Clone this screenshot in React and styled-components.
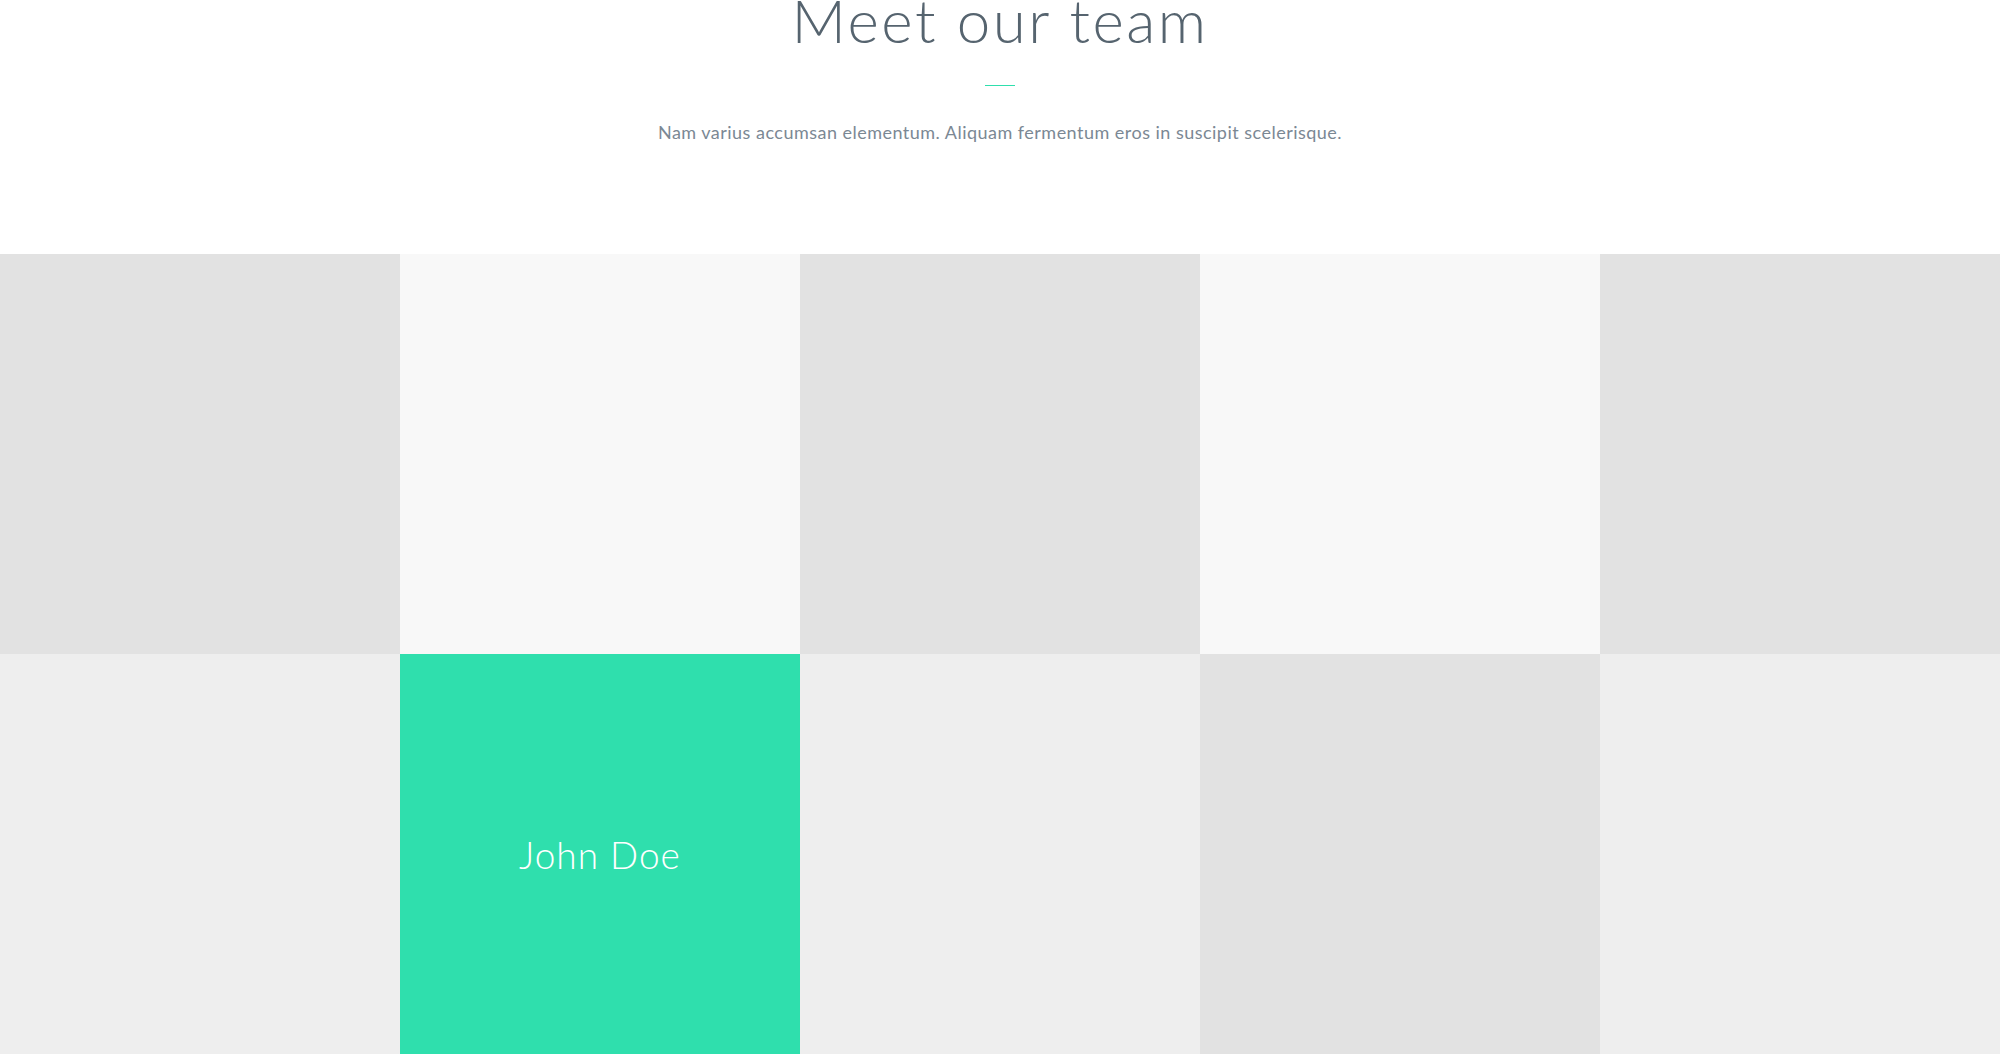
import React from "react";
import styled, { createGlobalStyle } from "styled-components";

const GlobalStyle = createGlobalStyle`
  html, body {
    margin: 0;
    padding: 0;
    background: #ffffff;
    overflow: hidden;
  }
`;

const Page = styled.div`
  width: 2000px;
  height: 1054px;
  overflow: hidden;
  font-family: Lato, "Liberation Sans", sans-serif;
`;

const Header = styled.header`
  display: flex;
  flex-direction: column;
  align-items: center;
  height: 254px;
`;

const Title = styled.h2`
  margin: -16px 0 0;
  font-size: 60px;
  font-weight: 300;
  line-height: 72px;
  letter-spacing: 2.5px;
  color: #56646f;
`;

const Divider = styled.div`
  width: 30px;
  height: 1px;
  margin-top: 29px;
  background: #2fdfad;
`;

const Subtitle = styled.p`
  margin: 34px 0 0;
  font-size: 18px;
  line-height: 24px;
  letter-spacing: 0.48px;
  color: #7b8894;
`;

const Grid = styled.div`
  display: grid;
  grid-template-columns: repeat(5, 400px);
  grid-auto-rows: 400px;
`;

const Cell = styled.div`
  display: flex;
  align-items: center;
  justify-content: center;
  background: ${(p) => p.$bg};
`;

const Name = styled.span`
  font-size: 37px;
  font-weight: 300;
  letter-spacing: 1px;
  color: #ffffff;
`;

const cells = [
  { bg: "#e2e2e2" },
  { bg: "#f8f8f8" },
  { bg: "#e2e2e2" },
  { bg: "#f8f8f8" },
  { bg: "#e2e2e2" },
  { bg: "#eeeeee" },
  { bg: "#2fdfad", name: "John Doe" },
  { bg: "#eeeeee" },
  { bg: "#e2e2e2" },
  { bg: "#eeeeee" },
];

export default function App() {
  return (
    <Page>
      <GlobalStyle />
      <Header>
        <Title>Meet our team</Title>
        <Divider />
        <Subtitle>Nam varius accumsan elementum. Aliquam fermentum eros in suscipit scelerisque.</Subtitle>
      </Header>
      <Grid>
        {cells.map((c, i) => (
          <Cell key={i} $bg={c.bg}>
            {c.name && <Name>{c.name}</Name>}
          </Cell>
        ))}
      </Grid>
    </Page>
  );
}
